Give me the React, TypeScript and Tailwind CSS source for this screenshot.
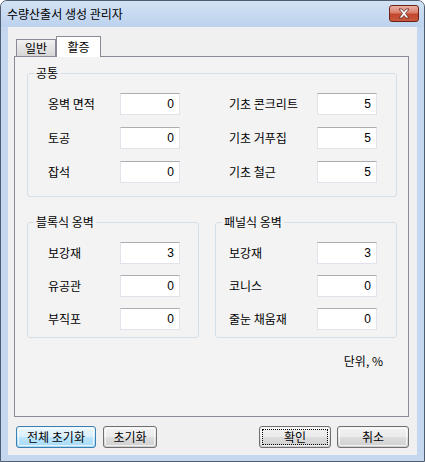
import React from "react";

const font = { fontFamily: '"Noto Sans CJK KR", "Liberation Sans", sans-serif' };

function Field({ value }: { value: string }) {
  return (
    <div className="w-[60px] h-[22px] bg-white border border-[#e2e3ea] border-t-[#abadb3] flex items-center justify-end pr-[5px] text-[12px] leading-none text-black" style={{ fontFamily: '"Liberation Sans", sans-serif' }}>
      {value}
    </div>
  );
}

function Row({ label, value, labelW }: { label: string; value: string; labelW: number }) {
  return (
    <div className="flex items-center h-[22px]">
      <div style={{ width: labelW }} className="text-[12px] leading-[16px] text-black whitespace-nowrap">{label}</div>
      <Field value={value} />
    </div>
  );
}

function Btn({ children, w, variant }: { children: React.ReactNode; w: string; variant?: "default" | "focus" }) {
  const border = variant === "default" ? "border-[#3c7fb1]" : "border-[#707070]";
  const bg =
    variant === "default"
      ? "bg-[linear-gradient(to_bottom,#eaf6fd_0%,#d9f0fc_50%,#bee6fd_51%,#a7d9f5_100%)]"
      : "bg-[linear-gradient(to_bottom,#f2f2f2_0%,#ebebeb_50%,#dddddd_51%,#cfcfcf_100%)]";
  return (
    <div className={`${w} h-[22px] rounded-[3px] border ${border} ${bg} p-[1px]`}>
      <div className={`w-full h-full rounded-[2px] border border-white/70 flex items-center justify-center text-[12px] leading-none text-black ${variant === "focus" ? "outline outline-1 outline-dotted outline-black -outline-offset-2" : ""}`}>
        {children}
      </div>
    </div>
  );
}

export default function App() {
  return (
    <div style={font} className="w-[425px] h-[462px] flex flex-col bg-[#c4d7ef] border border-[#4f5d70] rounded-t-[7px] overflow-hidden">
      {/* Title bar */}
      <div className="h-[26px] flex items-start justify-between pl-[6px] pr-[5px] bg-[linear-gradient(to_bottom,#d3e2f5,#bcd2ed)]">
        <span className="text-[12px] leading-[16px] mt-[5px] text-black">수량산출서 생성 관리자</span>
        <div className="mt-[4px] w-[30px] h-[17px] rounded-[3px] border border-[#6b2218] bg-[linear-gradient(to_bottom,#eab0a2_0%,#d8806a_45%,#c2452c_55%,#c9583c_100%)] flex items-center justify-center">
          <svg width="14" height="11" viewBox="0 0 14 11">
            <path d="M2 1 L5 1 L7 3.5 L9 1 L12 1 L8.5 5.5 L12 10 L9 10 L7 7.5 L5 10 L2 10 L5.5 5.5 Z" fill="#ffffff" stroke="#5a2a22" strokeWidth="0.8" strokeLinejoin="round" />
          </svg>
        </div>
      </div>

      {/* Client area */}
      <div className="flex-1 px-[7px] pb-[6px]">
        <div className="h-full bg-[#f0f0f0] flex flex-col pl-[6px] pr-[8px] pt-[9px]">
          {/* Tabs */}
          <div className="h-[20px] flex items-end pl-[2px] relative z-10">
            <div className="w-[40px] h-[17px] border border-[#898c95] border-b-0 bg-[linear-gradient(to_bottom,#f2f2f2,#d6d6d6)] flex items-center justify-center text-[12px] leading-none text-black">
              일반
            </div>
            <div className="w-[45px] h-[21px] -mb-[1px] border border-[#898c95] border-b-0 bg-white flex items-center justify-center text-[12px] leading-none text-black">
              활증
            </div>
          </div>

          {/* Panel */}
          <div className="h-[361px] border border-[#898c95] bg-[#f3f3f3] pl-[12px] pr-[11px] pt-[8px] flex flex-col">
            <fieldset className="border border-[#d5dfe5] rounded-[3px] p-0">
              <legend className="ml-[6px] px-[2px] text-[12px] leading-[16px] text-black">공통</legend>
              <div className="flex justify-between pl-[20px] pr-[19px] pt-[12px] pb-[13px]">
                <div className="flex flex-col gap-[12px]">
                  <Row label="옹벽 면적" value="0" labelW={72} />
                  <Row label="토공" value="0" labelW={72} />
                  <Row label="잡석" value="0" labelW={72} />
                </div>
                <div className="flex flex-col gap-[12px]">
                  <Row label="기초 콘크리트" value="5" labelW={88} />
                  <Row label="기초 거푸집" value="5" labelW={88} />
                  <Row label="기초 철근" value="5" labelW={88} />
                </div>
              </div>
            </fieldset>

            <div className="flex justify-between mt-[17px]">
              <fieldset className="w-[172px] border border-[#d5dfe5] rounded-[3px] p-0">
                <legend className="ml-[6px] px-[2px] text-[12px] leading-[16px] text-black">블록식 옹벽</legend>
                <div className="flex flex-col gap-[11px] pl-[20px] pt-[12px] pb-[7px]">
                  <Row label="보강재" value="3" labelW={72} />
                  <Row label="유공관" value="0" labelW={72} />
                  <Row label="부직포" value="0" labelW={72} />
                </div>
              </fieldset>
              <fieldset className="w-[182px] border border-[#d5dfe5] rounded-[3px] p-0">
                <legend className="ml-[6px] px-[2px] text-[12px] leading-[16px] text-black">패널식 옹벽</legend>
                <div className="flex flex-col gap-[11px] pl-[13px] pt-[12px] pb-[7px]">
                  <Row label="보강재" value="3" labelW={88} />
                  <Row label="코니스" value="0" labelW={88} />
                  <Row label="줄눈 채움재" value="0" labelW={88} />
                </div>
              </fieldset>
            </div>

            <div className="mt-[15px] flex justify-end pr-[14px] text-[12px] leading-[16px] text-black">단위, %</div>
          </div>

          {/* Buttons */}
          <div className="mt-[9px] flex items-center pl-[2px]">
            <Btn w="w-[80px]" variant="default">전체 초기화</Btn>
            <div className="ml-[7px]"><Btn w="w-[54px]">초기화</Btn></div>
            <div className="ml-auto"><Btn w="w-[72px]" variant="focus">확인</Btn></div>
            <div className="ml-[6px]"><Btn w="w-[72px]">취소</Btn></div>
          </div>
        </div>
      </div>
    </div>
  );
}
